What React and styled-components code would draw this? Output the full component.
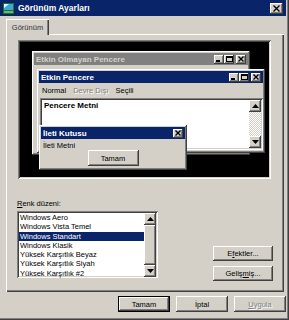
import styled, { createGlobalStyle, css } from "styled-components";

const GlobalStyle = createGlobalStyle`
  html, body {
    margin: 0;
    padding: 0;
    background: #d4d0c8;
  }
  body {
    font-family: "Liberation Sans", Arial, sans-serif;
    color: #000;
  }
  * {
    box-sizing: border-box;
  }
`;

const raised = css`
  box-shadow: inset -1px -1px #404040, inset 1px 1px #ffffff,
    inset -2px -2px #808080, inset 2px 2px #d4d0c8;
`;

const sunken = css`
  box-shadow: inset 1px 1px #808080, inset -1px -1px #ffffff,
    inset 2px 2px #404040, inset -2px -2px #d4d0c8;
`;

const disabledText = css`
  color: #808080;
  text-shadow: 1px 1px 0 #ffffff;
`;

const Window = styled.div`
  width: 289px;
  height: 320px;
  background: #d4d0c8;
  display: flex;
  flex-direction: column;
  padding: 0 3px 3px 0;
  box-shadow: inset -1px -1px #404040, inset -2px -2px #808080;
  overflow: hidden;
`;

const TitleBar = styled.div`
  height: 16px;
  flex: none;
  background: #0a246a;
  display: flex;
  align-items: center;
  gap: 3px;
  padding: 0 3px 0 2px;
  color: #fff;
  font-weight: bold;
  font-size: 8.5px;
`;

const TitleText = styled.span`
  flex: 1;
  white-space: nowrap;
`;

const CaptionButton = styled.div`
  width: ${(p) => p.$w || 10}px;
  height: ${(p) => p.$h || 9}px;
  background: #d4d0c8;
  ${raised};
  display: flex;
  align-items: center;
  justify-content: center;
  margin-left: ${(p) => p.$gap || 0}px;
  flex: none;
`;

const TabStrip = styled.div`
  display: flex;
  padding: 3px 0 0 6px;
  height: 18px;
  flex: none;
`;

const Tab = styled.div`
  width: 43px;
  height: 16px;
  margin-bottom: -1px;
  background: #d4d0c8;
  box-shadow: inset 1px 1px #ffffff, inset -1px 0 #404040, inset -2px 0 #808080;
  font-size: 7.5px;
  color: #333;
  display: flex;
  align-items: center;
  justify-content: center;
  position: relative;
  z-index: 1;
`;

const Panel = styled.div`
  margin-left: 6px;
  width: 278px;
  height: 258px;
  flex: none;
  box-shadow: inset 1px 1px #ffffff, inset -1px -1px #404040,
    inset -2px -2px #808080;
  padding: 6px 0 0 12px;
  display: flex;
  flex-direction: column;
`;

const Preview = styled.div`
  width: 253px;
  height: 139px;
  flex: none;
  background: #000;
  ${sunken};
  position: relative;
`;

const MiniWindow = styled.div`
  position: absolute;
  left: ${(p) => p.$x}px;
  top: ${(p) => p.$y}px;
  width: ${(p) => p.$w}px;
  height: ${(p) => p.$h}px;
  background: #d4d0c8;
  ${raised};
  padding: 2px;
  display: flex;
  flex-direction: column;
`;

const MiniTitle = styled.div`
  height: 12px;
  flex: none;
  background: ${(p) => (p.$active ? "#0a246a" : "#808080")};
  color: ${(p) => (p.$active ? "#ffffff" : "#d4d0c8")};
  font-weight: bold;
  font-size: 8px;
  display: flex;
  align-items: center;
  padding: 0 2px 0 2px;
`;

const MenuRow = styled.div`
  height: 14px;
  flex: none;
  display: flex;
  align-items: center;
  gap: 7px;
  padding-left: 3px;
  font-size: 7.5px;
`;

const MenuItem = styled.span`
  ${(p) => p.$disabled && disabledText};
`;

const TextArea = styled.div`
  flex: 1;
  margin: 1px 0 1px 1px;
  background: #fff;
  ${sunken};
  padding: 2px;
  display: flex;
`;

const TextContent = styled.div`
  flex: 1;
  font-weight: bold;
  font-size: 8px;
  padding: 1px 0 0 2px;
`;

const ScrollBar = styled.div`
  width: 12px;
  flex: none;
  display: flex;
  flex-direction: column;
  background: repeating-conic-gradient(#ffffff 0 25%, #d4d0c8 0 50%) 0 0 / 2px 2px;
`;

const ArrowButton = styled.div`
  width: 12px;
  height: 12px;
  flex: none;
  background: #d4d0c8;
  ${raised};
  display: flex;
  align-items: center;
  justify-content: center;
`;

const Thumb = styled.div`
  height: ${(p) => p.$h}px;
  flex: none;
  background: #d4d0c8;
  ${raised};
`;

const Track = styled.div`
  flex: 1;
`;

const MessageBody = styled.div`
  flex: 1;
  display: flex;
  flex-direction: column;
  font-size: 7.5px;
  padding: 2px 0 0 2px;
`;

const MessageText = styled.div`
  height: 9px;
  line-height: 9px;
`;

const Button = styled.div`
  width: ${(p) => p.$w}px;
  height: ${(p) => p.$h || 16}px;
  flex: none;
  background: #d4d0c8;
  ${(p) =>
    p.$default
      ? css`
          box-shadow: inset 0 0 0 1px #000000, inset -2px -2px #404040,
            inset 2px 2px #ffffff, inset -3px -3px #808080;
        `
      : raised};
  display: flex;
  align-items: center;
  justify-content: center;
  font-size: 7.5px;
  ${(p) => p.$disabled && disabledText};
`;

const CenteredButton = styled(Button)`
  align-self: center;
  margin: 0 0 0 -2px;
`;

const LowerRow = styled.div`
  display: flex;
  margin: 20px 0 0 -1px;
`;

const SchemeColumn = styled.div`
  display: flex;
  flex-direction: column;
`;

const Label = styled.div`
  font-size: 7.5px;
  line-height: 10px;
  height: 10px;
  margin-bottom: 2px;
`;

const ListBox = styled.div`
  width: 141px;
  height: 67px;
  background: #fff;
  ${sunken};
  padding: 2px;
  display: flex;
`;

const Items = styled.div`
  flex: 1;
  display: flex;
  flex-direction: column;
`;

const Item = styled.div`
  height: 9.3px;
  line-height: 9.3px;
  font-size: 7.5px;
  padding-left: 1px;
  white-space: nowrap;
  color: ${(p) => (p.$selected ? "#ffffff" : "#000")};
  background: ${(p) => (p.$selected ? "#0a246a" : "transparent")};
`;

const SideButtons = styled.div`
  margin: 47px 0 0 55px;
  display: flex;
  flex-direction: column;
  gap: 5px;
`;

const DialogButtons = styled.div`
  display: flex;
  justify-content: flex-end;
  gap: 6px;
  padding: 4px 0 0 0;
`;

const Underline = styled.span`
  text-decoration: underline;
`;

function Glyph({ type }) {
  if (type === "min") {
    return (
      <svg width="6" height="6" viewBox="0 0 6 6">
        <rect x="0" y="4" width="4" height="2" fill="#000" />
      </svg>
    );
  }
  if (type === "max") {
    return (
      <svg width="7" height="6" viewBox="0 0 7 6">
        <rect x="0.5" y="0.5" width="6" height="5" fill="none" stroke="#000" />
        <rect x="0" y="0" width="7" height="2" fill="#000" />
      </svg>
    );
  }
  if (type === "up") {
    return (
      <svg width="7" height="4" viewBox="0 0 7 4">
        <path d="M3.5 0 L7 4 L0 4 Z" fill="#000" />
      </svg>
    );
  }
  if (type === "down") {
    return (
      <svg width="7" height="4" viewBox="0 0 7 4">
        <path d="M0 0 L7 0 L3.5 4 Z" fill="#000" />
      </svg>
    );
  }
  const s = type === "bigclose" ? 7 : 6;
  return (
    <svg width={s} height={s} viewBox={`0 0 ${s} ${s}`}>
      <path
        d={`M0.5 0.5 L${s - 0.5} ${s - 0.5} M${s - 0.5} 0.5 L0.5 ${s - 0.5}`}
        stroke="#000"
        strokeWidth="1.4"
      />
    </svg>
  );
}

function AppIcon() {
  return (
    <svg width="13" height="13" viewBox="0 0 13 13">
      <rect x="0.5" y="0.5" width="12" height="12" fill="#1e6b5c" stroke="#0b2b3c" />
      <rect x="2" y="2" width="9" height="6" fill="#3aa8d8" />
      <path d="M2 2 L7 2 L2 6 Z" fill="#e8f4ff" />
      <rect x="2" y="9" width="9" height="2" fill="#63c24a" />
    </svg>
  );
}

function Caption({ full }) {
  return (
    <>
      {full && (
        <>
          <CaptionButton>
            <Glyph type="min" />
          </CaptionButton>
          <CaptionButton>
            <Glyph type="max" />
          </CaptionButton>
        </>
      )}
      <CaptionButton $gap={full ? 2 : 0}>
        <Glyph type="close" />
      </CaptionButton>
    </>
  );
}

const schemes = [
  "Windows Aero",
  "Windows Vista Temel",
  "Windows Standart",
  "Windows Klasik",
  "Yüksek Karşıtlık Beyaz",
  "Yüksek Karşıtlık Siyah",
  "Yüksek Karşıtlık #2",
];

export default function App() {
  return (
    <>
      <GlobalStyle />
      <Window>
        <TitleBar>
          <AppIcon />
          <TitleText>Görünüm Ayarları</TitleText>
          <CaptionButton $w={13} $h={11}>
            <Glyph type="bigclose" />
          </CaptionButton>
        </TitleBar>

        <TabStrip>
          <Tab>Görünüm</Tab>
        </TabStrip>

        <Panel>
          <Preview>
            <MiniWindow $x={14} $y={11} $w={218} $h={104}>
              <MiniTitle>
                <TitleText>Etkin Olmayan Pencere</TitleText>
                <Caption full />
              </MiniTitle>
            </MiniWindow>

            <MiniWindow $x={19} $y={29} $w={228} $h={84}>
              <MiniTitle $active>
                <TitleText>Etkin Pencere</TitleText>
                <Caption full />
              </MiniTitle>
              <MenuRow>
                <MenuItem>Normal</MenuItem>
                <MenuItem $disabled>Devre Dışı</MenuItem>
                <MenuItem>Seçili</MenuItem>
              </MenuRow>
              <TextArea>
                <TextContent>Pencere Metni</TextContent>
                <ScrollBar>
                  <ArrowButton>
                    <Glyph type="up" />
                  </ArrowButton>
                  <Track />
                  <ArrowButton>
                    <Glyph type="down" />
                  </ArrowButton>
                </ScrollBar>
              </TextArea>
            </MiniWindow>

            <MiniWindow $x={21} $y={85} $w={148} $h={45}>
              <MiniTitle $active>
                <TitleText>İleti Kutusu</TitleText>
                <Caption />
              </MiniTitle>
              <MessageBody>
                <MessageText>İleti Metni</MessageText>
                <CenteredButton $w={51}>Tamam</CenteredButton>
              </MessageBody>
            </MiniWindow>
          </Preview>

          <LowerRow>
            <SchemeColumn>
              <Label>
                <Underline>R</Underline>enk düzeni:
              </Label>
              <ListBox>
                <Items>
                  {schemes.map((name) => (
                    <Item key={name} $selected={name === "Windows Standart"}>
                      {name}
                    </Item>
                  ))}
                </Items>
                <ScrollBar>
                  <ArrowButton>
                    <Glyph type="up" />
                  </ArrowButton>
                  <Thumb $h={40} />
                  <Track />
                  <ArrowButton>
                    <Glyph type="down" />
                  </ArrowButton>
                </ScrollBar>
              </ListBox>
            </SchemeColumn>

            <SideButtons>
              <Button $w={60} $h={15}>
                E<Underline>f</Underline>ektler...
              </Button>
              <Button $w={60} $h={15}>
                Geliş<Underline>m</Underline>iş...
              </Button>
            </SideButtons>
          </LowerRow>
        </Panel>

        <DialogButtons>
          <Button $w={52} $default>
            Tamam
          </Button>
          <Button $w={52}>İptal</Button>
          <Button $w={52} $disabled>
            <Underline>U</Underline>ygula
          </Button>
        </DialogButtons>
      </Window>
    </>
  );
}
